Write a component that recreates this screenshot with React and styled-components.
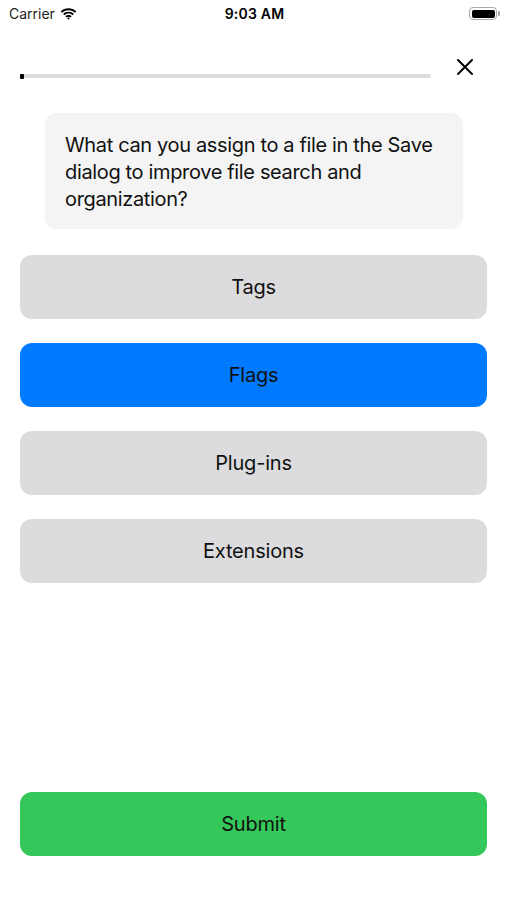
import React from "react";
import styled, { createGlobalStyle } from "styled-components";

const GlobalStyle = createGlobalStyle`
  * { box-sizing: border-box; }
  html, body {
    margin: 0;
    padding: 0;
    background: #ffffff;
    font-family: Inter, "Noto Sans", "Liberation Sans", sans-serif;
    color: #000;
  }
`;

const Screen = styled.div`
  width: 507px;
  height: 900px;
  display: flex;
  flex-direction: column;
  background: #fff;
`;

const StatusBar = styled.div`
  height: 27px;
  display: grid;
  grid-template-columns: 1fr auto 1fr;
  align-items: center;
  padding: 0 7px 0 9px;
  font-size: 14px;
`;

const Carrier = styled.div`
  display: flex;
  align-items: center;
  gap: 5px;
  color: #222;
`;

const Time = styled.div`
  font-weight: 600;
  letter-spacing: 0.2px;
`;

const Battery = styled.div`
  justify-self: end;
  display: flex;
  align-items: center;
`;

const BatteryBody = styled.div`
  width: 28px;
  height: 13px;
  border: 1.5px solid #a8a8a8;
  border-radius: 4px;
  padding: 1.5px;
  &::after {
    content: "";
    display: block;
    width: 100%;
    height: 100%;
    background: #000;
    border-radius: 2px;
  }
`;

const BatteryCap = styled.div`
  width: 2px;
  height: 5px;
  margin-left: 1px;
  background: #a8a8a8;
  border-radius: 0 1px 1px 0;
`;

const TopRow = styled.div`
  display: flex;
  align-items: flex-start;
  padding: 0 33px 0 20px;
  margin-top: 31px;
  height: 18px;
  gap: 25px;
`;

const Track = styled.div`
  flex: 1;
  height: 4px;
  margin-top: 16px;
  background: #dcdcdc;
  border-radius: 2px;
  display: flex;
  align-items: center;
`;

const Fill = styled.div`
  height: 5px;
  background: #000;
  border-radius: 1px;
`;

const Close = styled.button`
  border: none;
  background: none;
  padding: 0;
  width: 18px;
  height: 18px;
  display: flex;
  cursor: pointer;
`;

const Question = styled.div`
  margin: 37px 44px 0 45px;
  background: #f4f4f4;
  border-radius: 12px;
  padding: 19px 20px 16px;
  font-size: 20px;
  line-height: 27px;
  letter-spacing: -0.35px;
  color: #111;
`;

const Options = styled.div`
  display: flex;
  flex-direction: column;
  gap: 24px;
  padding: 0 20px;
  margin-top: 26px;
`;

const Option = styled.button`
  height: 64px;
  border: none;
  border-radius: 12px;
  background: ${(p) => (p.$selected ? "#007aff" : "#dcdcde")};
  font-family: inherit;
  font-size: 20px;
  letter-spacing: -0.2px;
  color: #111;
  cursor: pointer;
`;

const Spacer = styled.div`
  flex: 1;
`;

const Submit = styled(Option)`
  margin: 0 20px 44px;
  background: #34c759;
`;

const options = ["Tags", "Flags", "Plug-ins", "Extensions"];

export default function App() {
  return (
    <Screen>
      <GlobalStyle />
      <StatusBar>
        <Carrier>
          Carrier
          <svg width="17" height="12" viewBox="0 0 17 12">
            <path d="M8.5 2.2c2.5 0 4.8 1 6.5 2.6l1.3-1.4C14.3 1.4 11.5.2 8.5.2S2.7 1.4.7 3.4L2 4.8c1.7-1.6 4-2.6 6.5-2.6z" fill="#000" />
            <path d="M8.5 5.6c1.6 0 3 .6 4.1 1.6l1.3-1.4C12.5 4.5 10.6 3.7 8.5 3.7S4.5 4.5 3.1 5.8l1.3 1.4c1.1-1 2.5-1.6 4.1-1.6z" fill="#000" />
            <path d="M8.5 8.9c.7 0 1.3.3 1.8.7l1.4-1.4c-.8-.8-2-1.3-3.2-1.3s-2.4.5-3.2 1.3l1.4 1.4c.5-.4 1.1-.7 1.8-.7zM8.5 11.8l1.4-1.5c-.4-.3-.9-.5-1.4-.5s-1 .2-1.4.5z" fill="#000" />
          </svg>
        </Carrier>
        <Time>9:03 AM</Time>
        <Battery>
          <BatteryBody />
          <BatteryCap />
        </Battery>
      </StatusBar>

      <TopRow>
        <Track>
          <Fill style={{ width: `${(1 / 100) * 100}%` }} />
        </Track>
        <Close aria-label="Close">
          <svg width="18" height="18" viewBox="0 0 18 18">
            <path d="M2 2l14 14M16 2L2 16" stroke="#000" strokeWidth="2" strokeLinecap="round" />
          </svg>
        </Close>
      </TopRow>

      <Question>
        What can you assign to a file in the Save dialog to improve file search and organization?
      </Question>

      <Options>
        {options.map((o) => (
          <Option key={o} $selected={o === "Flags"}>
            {o}
          </Option>
        ))}
      </Options>

      <Spacer />
      <Submit>Submit</Submit>
    </Screen>
  );
}
